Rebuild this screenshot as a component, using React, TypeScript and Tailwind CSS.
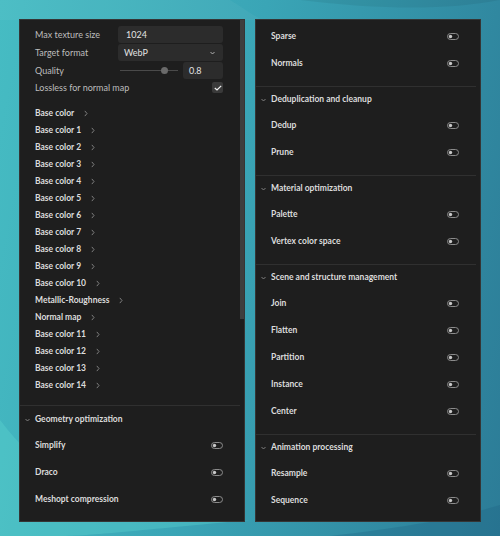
const baseColors = [
  "Base color",
  "Base color 1",
  "Base color 2",
  "Base color 3",
  "Base color 4",
  "Base color 5",
  "Base color 6",
  "Base color 7",
  "Base color 8",
  "Base color 9",
  "Base color 10",
  "Metallic-Roughness",
  "Normal map",
  "Base color 11",
  "Base color 12",
  "Base color 13",
  "Base color 14",
];

const rightSections: { title: string | null; items: string[] }[] = [
  { title: null, items: ["Sparse", "Normals"] },
  { title: "Deduplication and cleanup", items: ["Dedup", "Prune"] },
  { title: "Material optimization", items: ["Palette", "Vertex color space"] },
  {
    title: "Scene and structure management",
    items: ["Join", "Flatten", "Partition", "Instance", "Center"],
  },
  { title: "Animation processing", items: ["Resample", "Sequence"] },
];

const Toggle = () => (
  <svg width="12" height="7" viewBox="0 0 12 7" className="shrink-0">
    <rect x="0.5" y="0.5" width="11" height="6" rx="3" fill="none" stroke="#8a8a8a" strokeWidth="1" />
    <circle cx="3.5" cy="3.5" r="1.7" fill="#c8c8c8" />
  </svg>
);

const ChevronDown = ({ color = "#8a8a8a" }: { color?: string }) => (
  <svg width="5" height="4" viewBox="0 0 5 4" className="shrink-0">
    <polyline points="0.5,1 2.5,3 4.5,1" fill="none" stroke={color} strokeWidth="0.9" />
  </svg>
);

const ChevronRight = () => (
  <svg width="4" height="7" viewBox="0 0 4 7" className="shrink-0">
    <polyline points="0.8,0.9 3,3.5 0.8,6.1" fill="none" stroke="#8a8a8a" strokeWidth="0.9" />
  </svg>
);

const ToggleRow = ({ label }: { label: string }) => (
  <div className="flex h-[27px] items-center justify-between pl-[15px] pr-[17px]">
    <span className="text-[8.5px] font-bold text-[#dcdcdc]">{label}</span>
    <Toggle />
  </div>
);

const SectionHeader = ({ title }: { title: string }) => (
  <div className="flex h-[25px] items-center gap-[5px] pl-[5px]">
    <ChevronDown />
    <span className="text-[8.5px] font-bold text-[#dcdcdc]">{title}</span>
  </div>
);

const App = () => {
  return (
    <div className="relative flex h-[536px] w-[500px] gap-[10px] overflow-hidden bg-[linear-gradient(100deg,#46bcc3_0%,#3aa5b6_45%,#2c7c97_100%)] px-[19px] pt-[19px] pb-[14px] font-['Lato',sans-serif]">
      {/* background waves */}
      <svg className="absolute inset-0" width="500" height="536" viewBox="0 0 500 536">
        <path d="M0 0 H230 C 240 6, 248 12, 262 20 L 0 20 Z" fill="#ffffff" opacity="0.04" />
        <path d="M300 0 C 380 10, 450 10, 500 0 L500 0 Z" fill="#000" opacity="0.06" />
        <path d="M0 420 C 60 500, 140 522, 250 520 C 140 530, 90 536, 60 536 L0 536 Z" fill="#5fd6d2" opacity="0.35" />
        <path d="M330 536 C 400 528, 450 520, 500 505 L500 536 Z" fill="#1f5f80" opacity="0.3" />
      </svg>

      {/* left panel */}
      <div className="relative flex h-[503px] w-[226px] flex-col overflow-hidden border border-[#353535] bg-[#1e1e1e]">
        <div className="absolute top-0 right-0 h-[299px] w-[4px] bg-[#3e3e3e]" />
        <div className="mr-[4px] flex flex-col pt-[6px]">
          <div className="flex flex-col gap-[1px] pl-[15px] pr-[17px]">
            <div className="flex h-[17px] items-center">
              <span className="w-[83px] text-[9px] text-[#bdbdbd]">Max texture size</span>
              <div className="flex h-[17px] flex-1 items-center rounded-[3px] bg-[#2c2c2c] pl-[8px] text-[9px] text-[#e2e2e2]">
                1024
              </div>
            </div>
            <div className="flex h-[17px] items-center">
              <span className="w-[83px] text-[9px] text-[#bdbdbd]">Target format</span>
              <div className="flex h-[17px] flex-1 items-center justify-between rounded-[3px] bg-[#2c2c2c] pl-[6px] pr-[8px] text-[9px] text-[#e2e2e2]">
                <span>WebP</span>
                <ChevronDown color="#bdbdbd" />
              </div>
            </div>
            <div className="flex h-[17px] items-center">
              <span className="w-[85px] text-[9px] text-[#bdbdbd]">Quality</span>
              <div className="relative flex h-[17px] w-[58px] items-center">
                <div className="h-[1px] w-full bg-[#4a4a4a]" />
                <div className="absolute left-[41px] h-[7px] w-[7px] rounded-full bg-[#6a6a6a]" />
              </div>
              <div className="ml-[5px] flex h-[17px] flex-1 items-center rounded-[3px] bg-[#2c2c2c] pl-[6px] text-[9px] text-[#e2e2e2]">
                0.8
              </div>
            </div>
            <div className="flex h-[15px] items-center justify-between">
              <span className="text-[9px] text-[#bdbdbd]">Lossless for normal map</span>
              <div className="flex h-[11px] w-[11px] items-center justify-center rounded-[2px] bg-[#3a3a3a]">
                <svg width="8" height="6" viewBox="0 0 8 6">
                  <polyline points="0.8,3 3,5 7.2,0.8" fill="none" stroke="#f0f0f0" strokeWidth="1.2" />
                </svg>
              </div>
            </div>
          </div>

          <div className="mt-[10px] flex flex-col pb-[11px] pl-[15px]">
            {baseColors.map((name) => (
              <div key={name} className="flex h-[17px] items-center gap-[10px]">
                <span className="text-[8.5px] font-bold text-[#dcdcdc]">{name}</span>
                <ChevronRight />
              </div>
            ))}
          </div>

          <div className="border-t border-[#303030] pt-[1px]">
            <SectionHeader title="Geometry optimization" />
            <ToggleRow label="Simplify" />
            <ToggleRow label="Draco" />
            <ToggleRow label="Meshopt compression" />
            <ToggleRow label="Quantize" />
          </div>
        </div>
      </div>

      {/* right panel */}
      <div className="relative flex h-[503px] w-[226px] flex-col overflow-hidden border border-[#353535] bg-[#1e1e1e]">
        <div className="mr-[4px] flex flex-col pt-[3px]">
          {rightSections.map((s, i) => (
            <div key={i} className={i > 0 ? "border-t border-[#303030] pb-[9px]" : "pb-[9px]"}>
              {s.title && <SectionHeader title={s.title} />}
              {s.items.map((it) => (
                <ToggleRow key={it} label={it} />
              ))}
            </div>
          ))}
        </div>
      </div>
    </div>
  );
};

export default App;
